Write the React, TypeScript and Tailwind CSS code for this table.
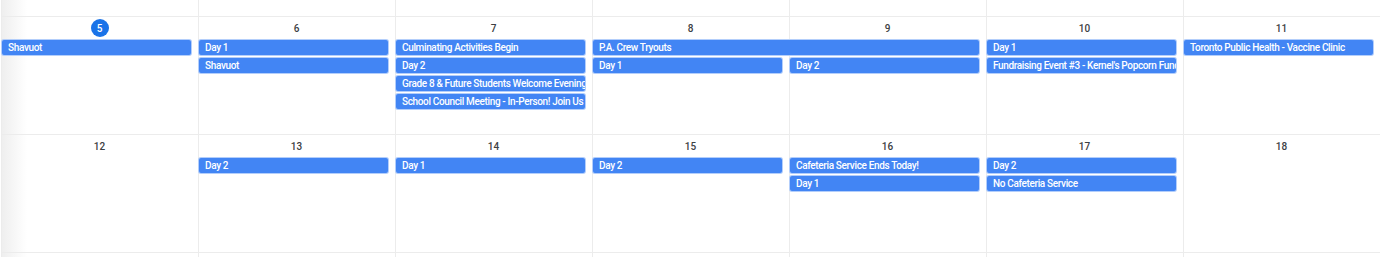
type CalEvent = {
  col: number
  row: number
  span?: number
  title: string
}

type Week = {
  days: number[]
  today?: number
  events: CalEvent[]
}

const colStart = ["", "col-start-1", "col-start-2", "col-start-3", "col-start-4", "col-start-5", "col-start-6", "col-start-7"]
const rowStart = ["", "row-start-2", "row-start-3", "row-start-4", "row-start-5"]
const spanCls = ["", "col-span-1", "col-span-2", "col-span-3"]

const weeks: Week[] = [
  {
    days: [5, 6, 7, 8, 9, 10, 11],
    today: 5,
    events: [
      { col: 1, row: 1, title: "Shavuot" },
      { col: 2, row: 1, title: "Day 1" },
      { col: 2, row: 2, title: "Shavuot" },
      { col: 3, row: 1, title: "Culminating Activities Begin" },
      { col: 3, row: 2, title: "Day 2" },
      { col: 3, row: 3, title: "Grade 8 & Future Students Welcome Evening" },
      { col: 3, row: 4, title: "School Council Meeting - In-Person! Join Us" },
      { col: 4, row: 1, span: 2, title: "P.A. Crew Tryouts" },
      { col: 4, row: 2, title: "Day 1" },
      { col: 5, row: 2, title: "Day 2" },
      { col: 6, row: 1, title: "Day 1" },
      { col: 6, row: 2, title: "Fundraising Event #3 - Kernel's Popcorn Fundraiser" },
      { col: 7, row: 1, title: "Toronto Public Health - Vaccine Clinic" },
    ],
  },
  {
    days: [12, 13, 14, 15, 16, 17, 18],
    events: [
      { col: 2, row: 1, title: "Day 2" },
      { col: 3, row: 1, title: "Day 1" },
      { col: 4, row: 1, title: "Day 2" },
      { col: 5, row: 1, title: "Cafeteria Service Ends Today!" },
      { col: 5, row: 2, title: "Day 1" },
      { col: 6, row: 1, title: "Day 2" },
      { col: 6, row: 2, title: "No Cafeteria Service" },
    ],
  },
]

const EmptyStrip = ({ h }: { h: string }) => (
  <div className={`grid grid-cols-7 ${h}`}>
    {Array.from({ length: 7 }).map((_, i) => (
      <div key={i} className="border-l border-[#ececec]" />
    ))}
  </div>
)

const WeekRow = ({ week }: { week: Week }) => (
  <div className="grid h-[118px] grid-cols-7 grid-rows-[22px_18px_18px_18px_18px_1fr] border-t border-[#ececec]">
    {week.days.map((d, i) => (
      <div key={`bg-${d}`} className={`${colStart[i + 1]} row-span-full border-l border-[#ececec]`} />
    ))}
    {week.days.map((d, i) => (
      <div key={`num-${d}`} className={`${colStart[i + 1]} row-start-1 flex justify-center pt-[2px]`}>
        {d === week.today ? (
          <span className="flex h-[18px] w-[18px] items-center justify-center rounded-full bg-[#1a73e8] text-[10px] font-medium text-white">
            {d}
          </span>
        ) : (
          <span className="flex h-[18px] items-center text-[10px] font-medium text-[#3c4043]">{d}</span>
        )}
      </div>
    ))}
    {week.events.map((ev, i) => (
      <div
        key={i}
        className={`${colStart[ev.col]} ${rowStart[ev.row]} ${spanCls[ev.span ?? 1]} mr-[6px] h-[17px] overflow-hidden whitespace-nowrap rounded-[3px] border border-white/60 bg-[#4285f4] pl-[6px] pr-[3px] text-[10px] font-medium leading-[15px] tracking-[-0.35px] text-white`}
      >
        {ev.title}
      </div>
    ))}
  </div>
)

export default function App() {
  return (
    <div className="h-[257px] w-[1380px] overflow-hidden bg-white font-['Roboto',sans-serif]">
      <div className="ml-px bg-[linear-gradient(to_right,#eeeeee,#ffffff_26px)]">
        <EmptyStrip h="h-[16px]" />
        {weeks.map((w) => (
          <WeekRow key={w.days[0]} week={w} />
        ))}
        <div className="border-t border-[#ececec]">
          <EmptyStrip h="h-[5px]" />
        </div>
      </div>
    </div>
  )
}
